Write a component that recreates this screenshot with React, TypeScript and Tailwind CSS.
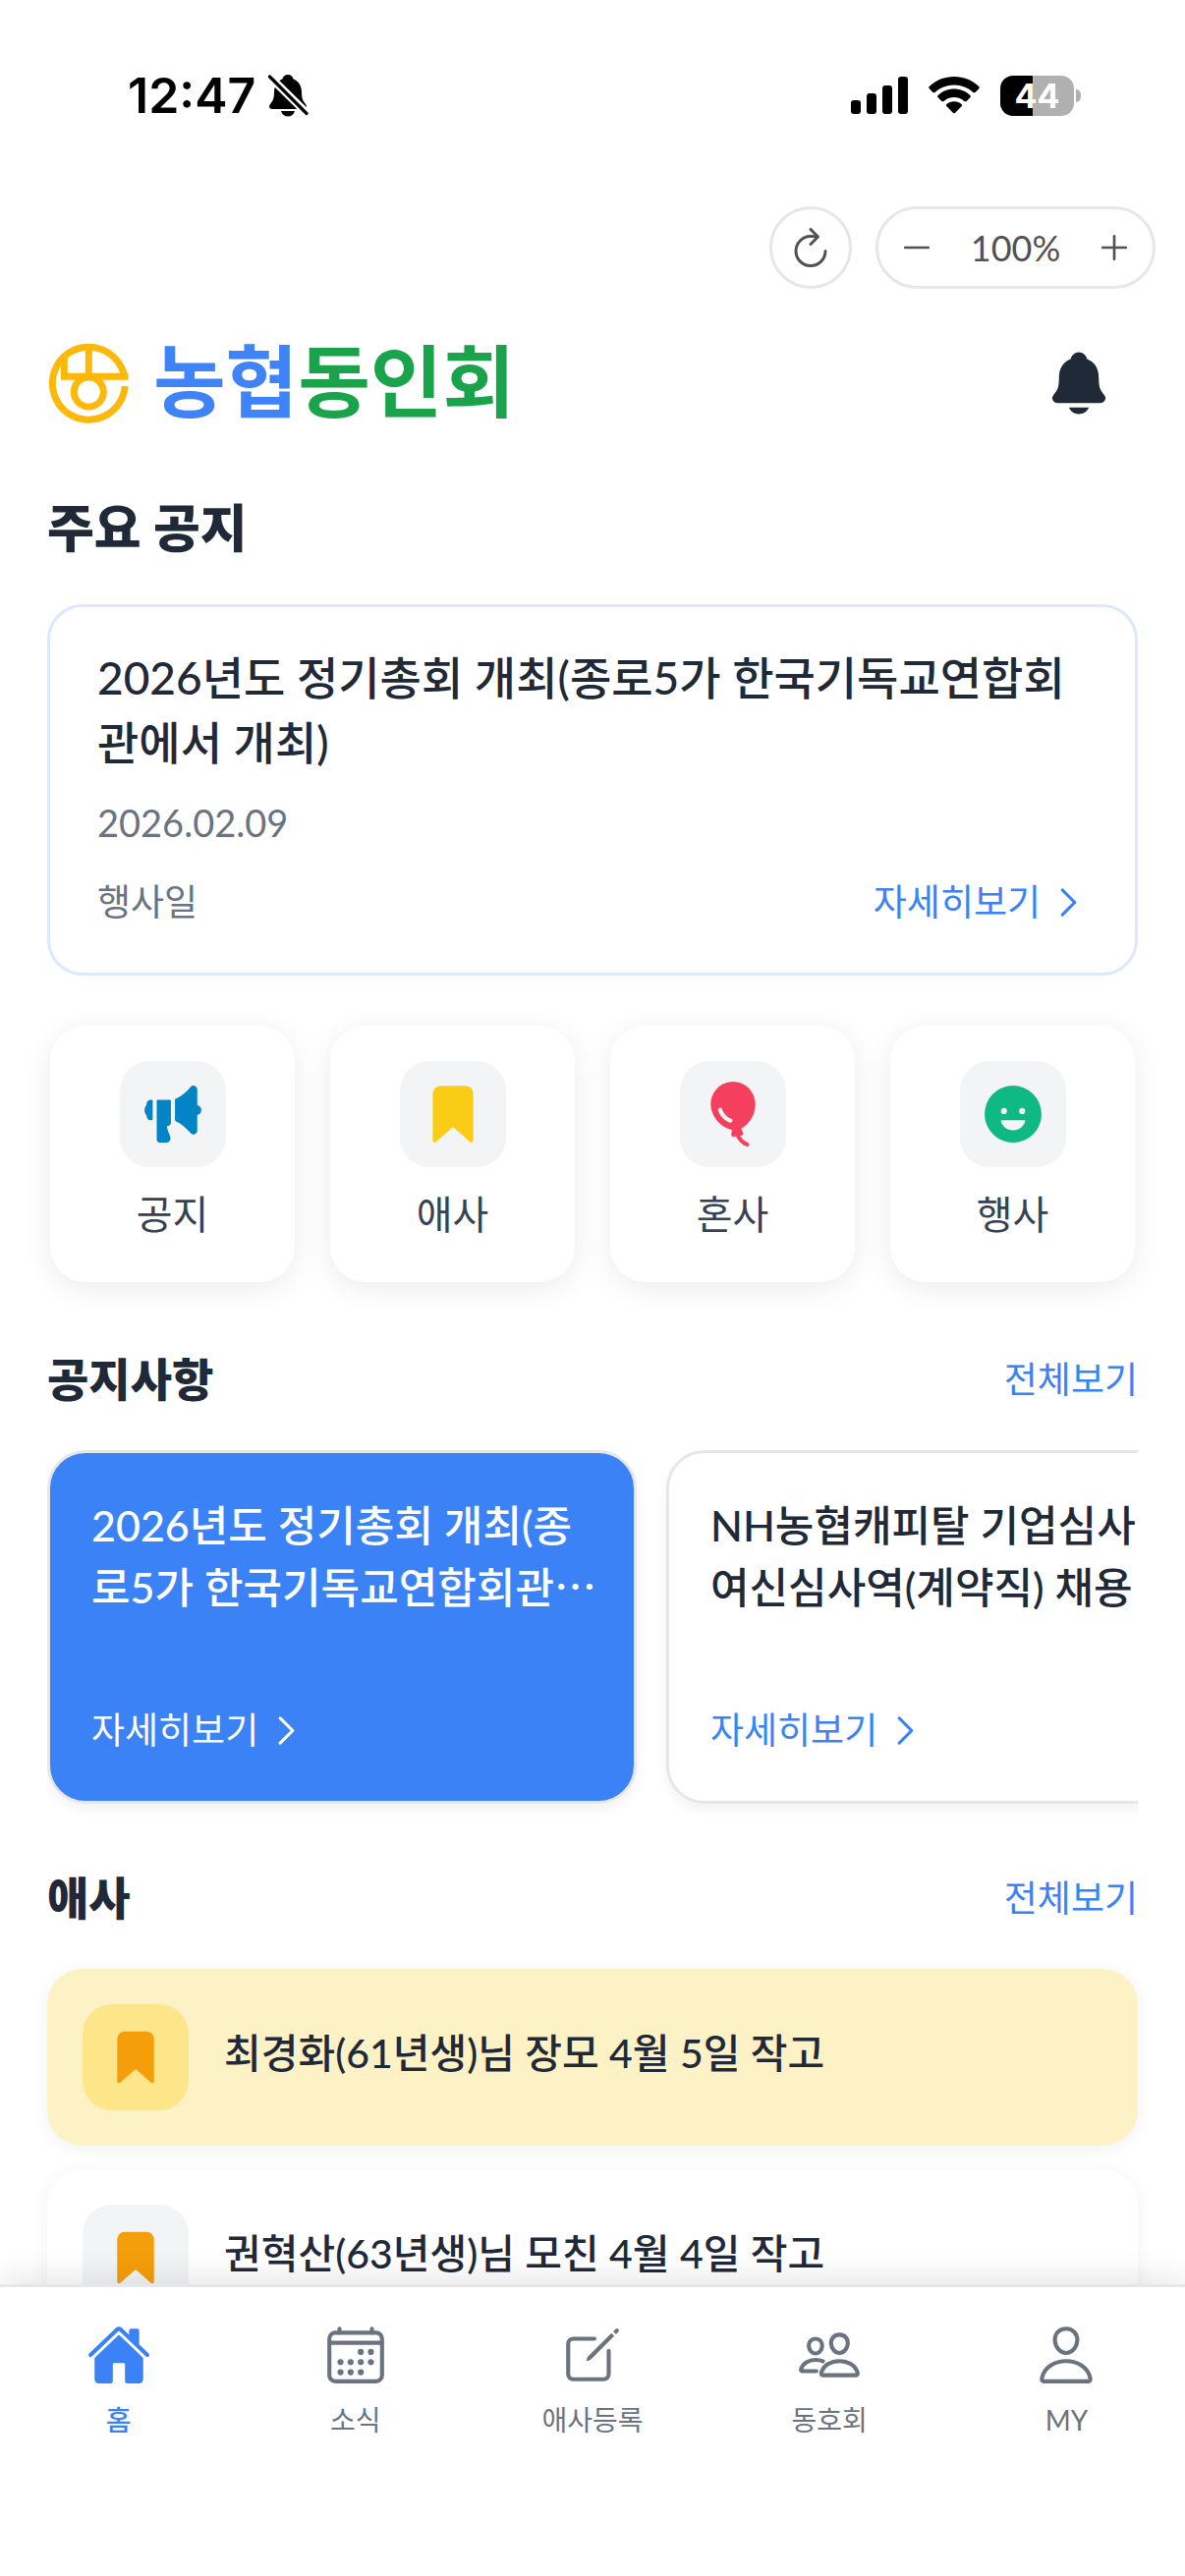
import type { ReactNode } from "react";
import {
  IoAdd,
  IoBalloon,
  IoBookmark,
  IoCalendarOutline,
  IoChevronForward,
  IoCreateOutline,
  IoHappy,
  IoHome,
  IoMegaphone,
  IoNotifications,
  IoPeopleOutline,
  IoPersonOutline,
  IoRefresh,
  IoRemove,
} from "react-icons/io5";

function StatusBar() {
  return (
    <header className="flex h-[197px] items-start justify-between pt-[67px] pr-[106px] pl-[130px] text-black">
      <div className="flex items-center gap-3">
        <span className="font-['Inter',sans-serif] text-[50px] leading-[60px] font-semibold">12:47</span>
        <svg viewBox="0 0 42 44" className="h-[44px] w-[42px]" aria-label="무음">
          <path
            d="M21 1c3 0 5 2 5.400 4.200C32 7.500 35 12.500 35 19c0 7 2 9.500 4 12 1.700 2 1 5-2 5H5c-3 0-3.700-3-2-5 2-2.500 4-5 4-12 0-6.500 3-11.500 8.600-13.800C16 3 18 1 21 1z"
            fill="currentColor"
          />
          <path d="M14 38h14c-1 3.600-3.600 5.500-7 5.500S15 41.600 14 38z" fill="currentColor" />
          <path d="M1 1.500 41 41" stroke="#fff" strokeWidth="8" />
          <path d="M2.500 3 40 40.500" stroke="currentColor" strokeWidth="3.200" strokeLinecap="round" />
        </svg>
      </div>
      <div className="flex h-[60px] items-center gap-[21px]">
        <svg viewBox="0 0 58 38" className="h-[38px] w-[58px]" aria-label="신호">
          <rect x="0" y="24" width="10" height="14" rx="3" />
          <rect x="16" y="17" width="10" height="21" rx="3" />
          <rect x="32" y="9" width="10" height="29" rx="3" />
          <rect x="48" y="0" width="10" height="38" rx="3" />
        </svg>
        <svg viewBox="0 0 52 38" className="h-[38px] w-[52px]" aria-label="와이파이">
          <path d="M26 0c9.700 0 18.500 3.700 25.200 9.900.7.600.7 1.700 0 2.400l-3.600 3.600c-.6.600-1.600.6-2.300 0C40.200 11.200 33.400 8.400 26 8.400S11.800 11.200 6.700 15.900c-.7.600-1.700.6-2.300 0L.8 12.300c-.7-.7-.7-1.800 0-2.400C7.500 3.700 16.300 0 26 0z" />
          <path d="M26 12.600c6.300 0 12 2.400 16.300 6.300.7.600.7 1.700 0 2.400l-3.600 3.600c-.6.600-1.600.6-2.300 0C33.600 22.500 30 21 26 21s-7.600 1.500-10.400 3.900c-.7.600-1.700.6-2.300 0l-3.600-3.600c-.7-.7-.7-1.800 0-2.400 4.300-3.900 10-6.300 16.300-6.300z" />
          <path d="M26 25.200c2.900 0 5.500 1 7.500 2.800.7.600.7 1.600 0 2.300l-6.300 6.500c-.7.700-1.700.7-2.400 0L18.500 30.300c-.7-.7-.7-1.700 0-2.300 2-1.800 4.600-2.800 7.500-2.800z" />
        </svg>
        <div className="flex items-center gap-[2px]">
          <div className="flex h-[41px] w-[75px] items-center justify-center rounded-[13px] bg-linear-to-r from-black from-44% to-[#b0b0b0] to-44% font-['Inter',sans-serif] text-[34px] leading-[41px] font-bold text-white">
            44
          </div>
          <div className="h-[13px] w-[5px] rounded-r-full bg-[#b0b0b0]" />
        </div>
      </div>
    </header>
  );
}

function ZoomControls() {
  return (
    <div className="flex items-center justify-end gap-6 pt-[13px] pr-[30px] text-[#525252]">
      <button aria-label="새로고침" className="flex size-[84px] items-center justify-center rounded-full border-3 border-[#e5e7eb]">
        <IoRefresh className="size-[48px]" />
      </button>
      <div className="flex h-[84px] w-[285px] items-center justify-between rounded-full border-3 border-[#e5e7eb] px-[18px]">
        <button aria-label="축소">
          <IoRemove className="size-[42px]" />
        </button>
        <span className="text-[36px] leading-[54px]">100%</span>
        <button aria-label="확대">
          <IoAdd className="size-[42px]" />
        </button>
      </div>
    </div>
  );
}

function Brand() {
  return (
    <div className="flex items-center justify-between pt-12 pr-[72px] pl-12">
      <div className="flex items-center gap-6">
        <svg viewBox="0 0 84 84" className="size-[84px]" fill="none" stroke="#fdb80a" strokeWidth="7" aria-hidden="true">
          <path d="M78.400 34A37 37 0 1 0 79.200 45" />
          <path d="M82.500 35.300H17.300V16" />
          <path d="M42.300 5v30" />
          <circle cx="42.300" cy="51" r="15" />
        </svg>
        <h1 className="pb-[6px] text-[80px] leading-[90px] font-bold text-[#3f83f8]">
          농협<span className="text-[#1aa34a]">동인회</span>
        </h1>
      </div>
      <button aria-label="알림" className="text-[#1f2937]">
        <IoNotifications className="size-[72px]" />
      </button>
    </div>
  );
}

function DetailLink({ className }: { className: string }) {
  return (
    <a href="#detail" className={`flex items-center gap-[6px] text-[37px] leading-[54px] ${className}`}>
      자세히보기
      <IoChevronForward className="size-[45px] [&_path]:[stroke-width:36px]" />
    </a>
  );
}

function SectionHeader({ title }: { title: string }) {
  return (
    <div className="flex items-center justify-between">
      <h2 className="text-[46px] leading-[66px] font-black text-[#1f2937]">{title}</h2>
      <a href="#all" className="text-[37px] leading-[54px] text-[#3b82f6]">
        전체보기
      </a>
    </div>
  );
}

function QuickCard({ icon, label }: { icon: ReactNode; label: string }) {
  return (
    <button className="flex flex-col items-center gap-[18px] rounded-[36px] bg-white pt-9 pb-[39px] shadow-[0_6px_30px_rgba(0,0,0,0.08)]">
      <span className="flex size-[108px] items-center justify-center rounded-[30px] bg-[#f3f4f6]">{icon}</span>
      <span className="text-[40px] leading-[60px] text-[#374151]">{label}</span>
    </button>
  );
}

function ObituaryItem({ text, highlighted }: { text: string; highlighted?: boolean }) {
  return (
    <li
      className={`flex items-center gap-9 rounded-[36px] p-9 shadow-[0_3px_18px_rgba(0,0,0,0.06)] ${highlighted ? "bg-[#fdf2c6]" : "bg-white"}`}
    >
      <span
        className={`flex size-[108px] shrink-0 items-center justify-center rounded-[30px] ${highlighted ? "bg-[#fde68a]" : "bg-[#f3f4f6]"}`}
      >
        <IoBookmark className="size-[60px] text-[#f59e0b]" />
      </span>
      <span className="pb-[9px] text-[41px] leading-[60px] font-medium text-[#1f2937]">{text}</span>
    </li>
  );
}

const quickLinks = [
  { label: "공지", icon: <IoMegaphone className="size-[66px] text-[#0284c7]" /> },
  { label: "애사", icon: <IoBookmark className="size-[66px] text-[#facc15]" /> },
  { label: "혼사", icon: <IoBalloon className="size-[66px] text-[#f43f5e]" /> },
  { label: "행사", icon: <IoHappy className="size-[66px] text-[#10b981]" /> },
];

const tabs = [
  { label: "홈", Icon: IoHome, active: true },
  { label: "소식", Icon: IoCalendarOutline, active: false },
  { label: "애사등록", Icon: IoCreateOutline, active: false },
  { label: "동호회", Icon: IoPeopleOutline, active: false },
  { label: "MY", Icon: IoPersonOutline, active: false },
];

export default function App() {
  return (
    <div className="flex h-screen flex-col overflow-hidden bg-white font-['Lato','Noto_Sans_CJK_KR',sans-serif]">
      <StatusBar />
      <ZoomControls />
      <Brand />
      <main className="min-h-0 flex-1 overflow-hidden px-12 pt-[60px]">
        <h2 className="text-[52px] leading-[78px] font-black text-[#1f2937]">주요 공지</h2>
        <article className="mt-[39px] rounded-[36px] border-3 border-[#dbe8fd] bg-white pt-[39px] pr-[45px] pb-[45px] pl-12">
          <h3 className="text-[46px] leading-[66px] font-medium break-all text-[#1f2937]">
            2026년도 정기총회 개최(종로5가 한국기독교연합회관에서 개최)
          </h3>
          <p className="mt-[21px] text-[38px] leading-[54px] text-[#6b7280]">2026.02.09</p>
          <div className="mt-[27px] flex items-center justify-between">
            <span className="text-[37px] leading-[54px] text-[#6b7280]">행사일</span>
            <DetailLink className="text-[#3b82f6]" />
          </div>
        </article>

        <nav className="mt-[51px] grid grid-cols-4 gap-9 px-[3px]">
          {quickLinks.map((q) => (
            <QuickCard key={q.label} icon={q.icon} label={q.label} />
          ))}
        </nav>

        <section className="mt-[66px]">
          <SectionHeader title="공지사항" />
          <div className="mt-[39px] flex gap-[30px] overflow-hidden pb-6">
            <article className="flex h-[360px] w-[600px] shrink-0 flex-col justify-between rounded-[39px] border-3 border-[#e5e7eb] bg-[#3b82f6] pt-[42px] pr-8 pb-[45px] pl-[42px] text-white shadow-[0_6px_12px_rgba(0,0,0,0.05)]">
              <h3 className="text-[43px] leading-[63px] font-medium break-all">
                2026년도 정기총회 개최(종로5가 한국기독교연합회관⋯
              </h3>
              <DetailLink className="text-white" />
            </article>
            <article className="flex h-[360px] w-[600px] shrink-0 flex-col justify-between rounded-[39px] border-3 border-[#e5e7eb] bg-white px-[42px] pt-[42px] pb-[45px] shadow-[0_6px_12px_rgba(0,0,0,0.05)]">
              <h3 className="text-[43px] leading-[63px] font-medium text-[#1f2937]">
                NH농협캐피탈 기업심사역 여신심사역(계약직) 채용
              </h3>
              <DetailLink className="text-[#3b82f6]" />
            </article>
          </div>
        </section>

        <section className="mt-[39px]">
          <SectionHeader title="애사" />
          <ul className="mt-[39px] flex flex-col gap-6">
            <ObituaryItem text="최경화(61년생)님 장모 4월 5일 작고" highlighted />
            <ObituaryItem text="권혁산(63년생)님 모친 4월 4일 작고" />
          </ul>
        </section>
      </main>

      <nav className="relative grid shrink-0 grid-cols-5 border-t-3 border-[#e5e7eb] bg-white pt-9 pb-[138px] shadow-[0_-6px_30px_rgba(0,0,0,0.1)]">
        {tabs.map(({ label, Icon, active }) => (
          <a
            key={label}
            href="#tab"
            className={`flex flex-col items-center gap-3 ${active ? "font-medium text-[#3b82f6]" : "text-[#6b7280]"}`}
          >
            <Icon className="size-[66px]" />
            <span className="text-[28px] leading-[42px]">{label}</span>
          </a>
        ))}
      </nav>
    </div>
  );
}
